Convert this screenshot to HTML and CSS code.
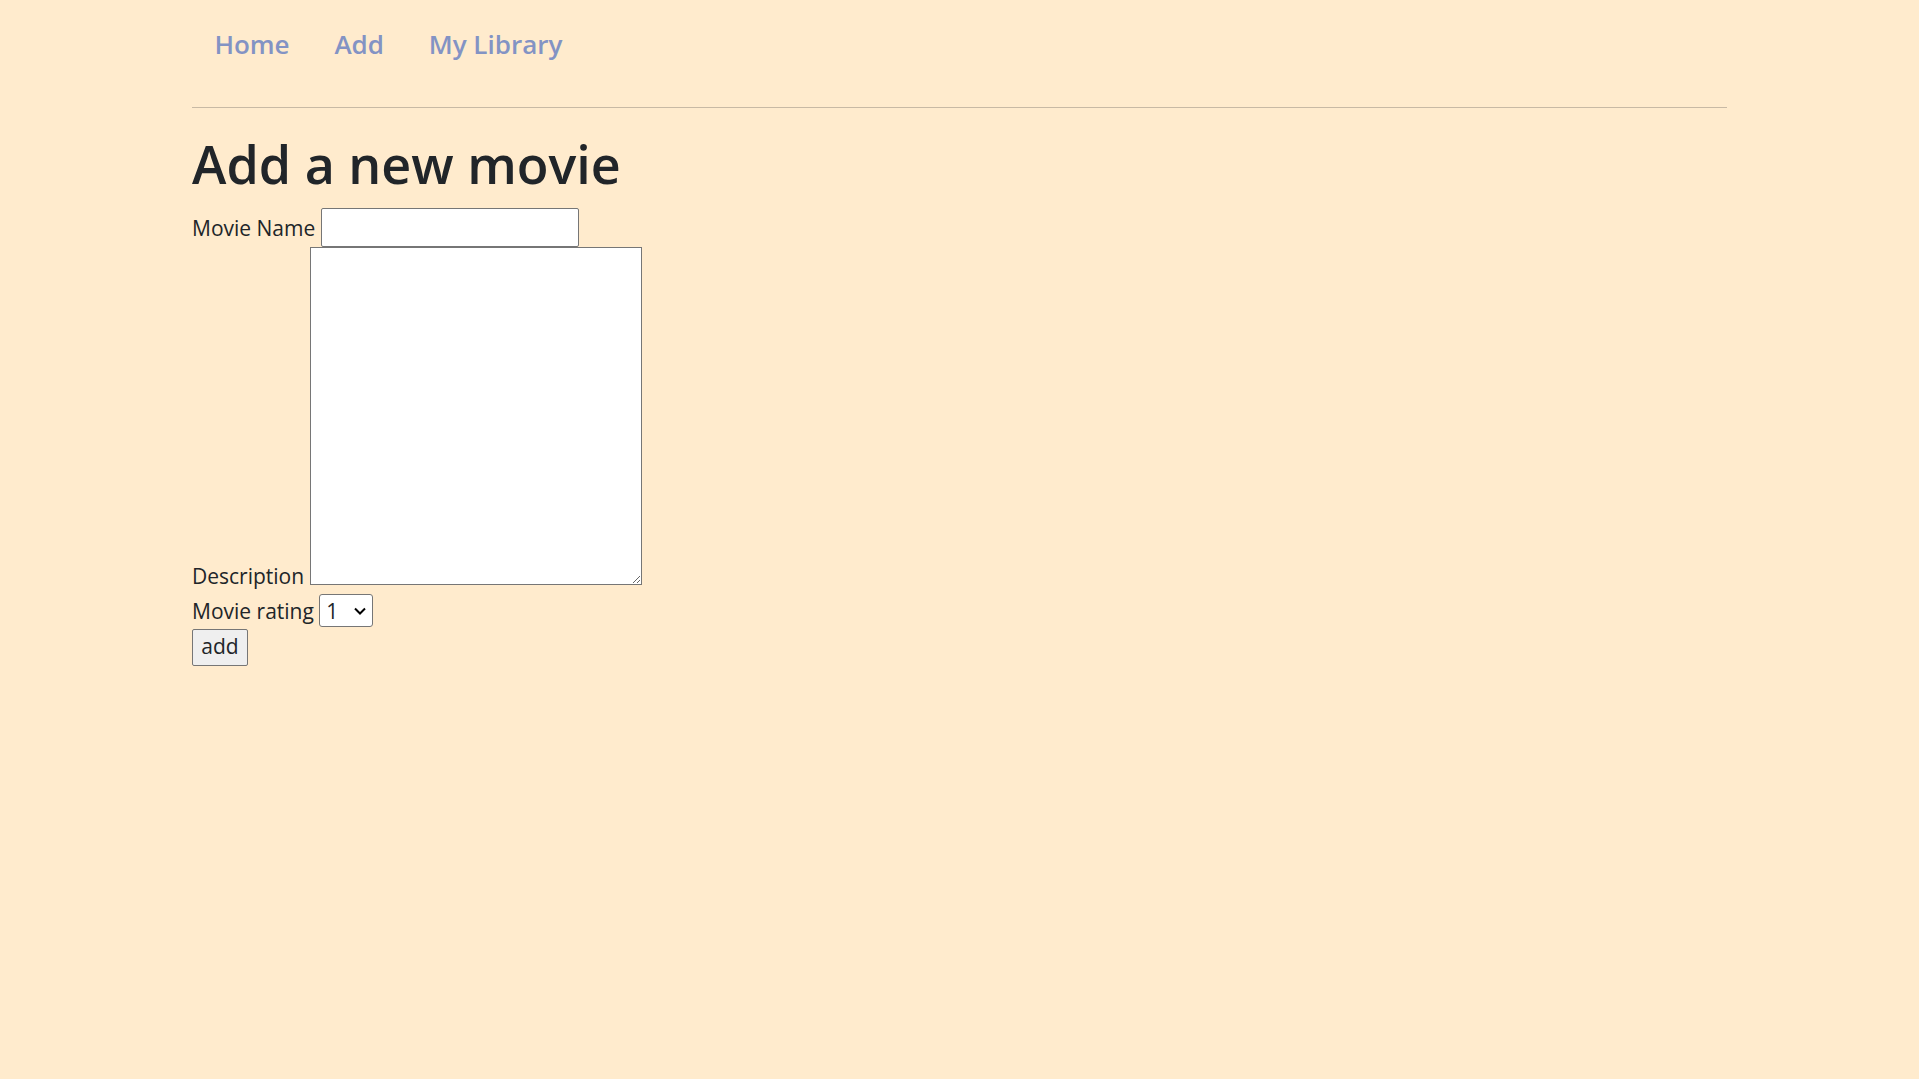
FILE: index.html
```html
<!DOCTYPE html>
<html lang="en">
<head>
<meta charset="utf-8">
<title>Add a new movie</title>
<link rel="stylesheet" href="styles.css">
</head>
<body>
<div class="container">
  <nav class="nav">
    <a class="nav-link" href="#">Home</a>
    <a class="nav-link" href="#">Add</a>
    <a class="nav-link" href="#">My Library</a>
  </nav>
  <hr class="divider">
  <h1 class="title">Add a new movie</h1>
  <form class="movie-form">
    <div class="row row-name">
      <label class="label" for="name">Movie Name</label>
      <input class="text-input" id="name" type="text">
    </div>
    <div class="row row-desc">
      <label class="label" for="desc">Description</label>
      <textarea class="text-area" id="desc"></textarea>
    </div>
    <div class="row row-rating">
      <label class="label" for="rating">Movie rating</label>
      <span class="select-wrap">
        <select class="rating-select" id="rating">
          <option>1</option><option>2</option><option>3</option><option>4</option><option>5</option>
        </select>
        <svg class="chevron" width="12" height="8" viewBox="0 0 12 8" aria-hidden="true"><path d="M1 1.5 L6 6.5 L11 1.5" fill="none" stroke="#000" stroke-width="2"/></svg>
      </span>
    </div>
    <div class="row row-submit">
      <button class="add-button" type="button">add</button>
    </div>
  </form>
</div>
</body>
</html>
```

FILE: styles.css
```css
* { box-sizing: border-box; }
html, body {
  margin: 0;
  padding: 0;
  background: #ffebcd;
}
body {
  font-family: "Open Sans", "Noto Sans", sans-serif;
  font-size: 21px;
  line-height: 1.5;
  color: #212529;
}
.container {
  width: 1535px;
  margin: 0 auto;
}
.nav {
  display: flex;
  padding: 12px 0 11px 0;
}
.nav-link {
  display: block;
  padding: 11px 22.4px;
  font-size: 26px;
  font-weight: 600;
  line-height: 42px;
  color: #8393c4;
  text-decoration: none;
}
.divider {
  margin: 20px 0 22px 0;
  border: 0;
  border-top: 1px solid #c8b9a4;
  height: 0;
}
.title {
  margin: 0 0 11px 0;
  font-size: 52px;
  font-weight: 600;
  line-height: 67px;
}
.movie-form { margin: 0; }
.row { line-height: 33px; }
.label { display: inline; }
.text-input {
  width: 258px;
  height: 39px;
  vertical-align: baseline;
  font: inherit;
  padding: 1px 2px;
  border: 1px solid #767676;
  border-radius: 2px;
  background: #fff;
}
.text-area {
  width: 332px;
  height: 338px;
  font: inherit;
  padding: 2px;
  border: 1px solid #767676;
  background: #fff;
  vertical-align: -1px;
  margin: 0;
}
.row-rating { margin-top: 1px; }
.select-wrap {
  position: relative;
  display: inline-block;
  vertical-align: baseline;
}
.rating-select {
  -webkit-appearance: none;
  appearance: none;
  width: 54px;
  height: 33px;
  font: inherit;
  line-height: normal;
  border: 1px solid #767676;
  border-radius: 3px;
  background: #fff;
  color: #212529;
  padding: 0 0 0 6px;
}
.chevron {
  position: absolute;
  right: 7px;
  top: 13px;
  pointer-events: none;
}
.row-submit { margin-top: 1px; }
.add-button {
  width: 56px;
  height: 37px;
  font: inherit;
  line-height: 1;
  padding: 0 0 2px 0;
  background: #efefef;
  border: 1px solid #767676;
  border-radius: 2px;
  color: #212529;
}
```
